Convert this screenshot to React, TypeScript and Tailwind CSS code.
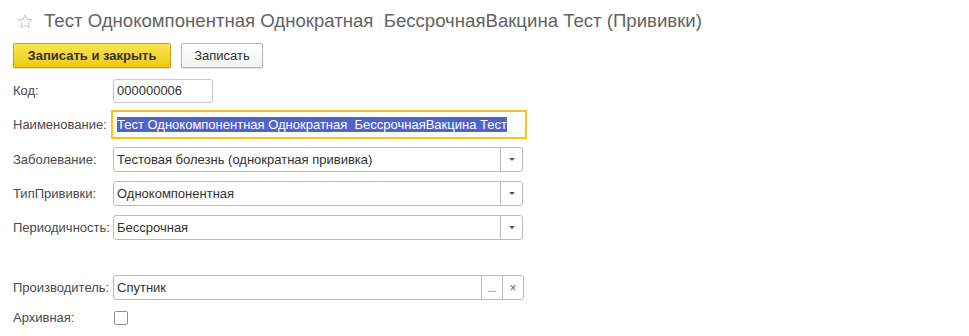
import React from 'react';

const labelCls = 'w-[100px] shrink-0 text-[13px] text-[#4a4a4a]';
const fieldCls = 'h-[25px] flex items-stretch border border-[#bcbcbc] rounded-[3px] bg-white';

const DropButton: React.FC = () => (
  <div className="w-[22px] border-l border-[#bcbcbc] flex items-center justify-center">
    <svg width="6" height="3" viewBox="0 0 6 3">
      <path d="M0 0 H6 L3 3 Z" fill="#555" />
    </svg>
  </div>
);

const SelectField: React.FC<{ value: string }> = ({ value }) => (
  <div className={`${fieldCls} w-[410px]`}>
    <div className="flex-1 flex items-center pl-[3px] text-[13px] text-[#333]">{value}</div>
    <DropButton />
  </div>
);

const App: React.FC = () => {
  return (
    <div className="w-[969px] h-[336px] bg-white px-[13px] overflow-hidden" style={{ fontFamily: '"Liberation Sans", Arial, sans-serif' }}>
      {/* title */}
      <div className="mt-[7px] h-[28px] flex items-center">
        <svg width="16" height="15" viewBox="0 0 16 15" className="ml-[4px] mr-[11px]">
          <path
            d="M8 0.8 L9.9 5.3 L14.8 5.7 L11.1 8.9 L12.2 13.7 L8 11.2 L3.8 13.7 L4.9 8.9 L1.2 5.7 L6.1 5.3 Z"
            fill="none"
            stroke="#c4c4c4"
            strokeWidth="1"
            strokeLinejoin="round"
          />
        </svg>
        <span className="text-[18.6px] text-[#636363] whitespace-pre">Тест Однокомпонентная Однократная  БессрочнаяВакцина Тест (Прививки)</span>
      </div>

      {/* buttons */}
      <div className="mt-[8px] flex gap-[10px]">
        <button className="h-[25px] w-[158px] rounded-[2px] border border-[#c9a400] bg-gradient-to-b from-[#fbe54f] to-[#f0c900] text-[13px] font-bold text-[#333] shadow-[0_1px_1px_rgba(0,0,0,0.15)]">
          Записать и закрыть
        </button>
        <button className="h-[25px] w-[82px] rounded-[2px] border border-[#b5b5b5] bg-gradient-to-b from-white to-[#f2f2f2] text-[13px] text-[#333] shadow-[0_1px_1px_rgba(0,0,0,0.12)]">
          Записать
        </button>
      </div>

      {/* Код */}
      <div className="mt-[11px] flex items-center">
        <div className={labelCls}>Код:</div>
        <div className="h-[24px] w-[100px] border border-[#c8c8c8] rounded-[3px] flex items-center pl-[3px] text-[13px] text-[#333]">
          000000006
        </div>
      </div>

      {/* Наименование */}
      <div className="mt-[7px] flex items-center">
        <div className="w-[98px] shrink-0 text-[13px] text-[#4a4a4a]">Наименование:</div>
        <div className="h-[29px] w-[416px] border-2 border-[#f5c518] flex items-center pl-[4px]">
          <span className="bg-[#5063c8] text-white text-[13px] leading-[15px] whitespace-pre">
            Тест Однокомпонентная Однократная  БессрочнаяВакцина Тест
          </span>
        </div>
      </div>

      {/* Заболевание */}
      <div className="mt-[8px] flex items-center">
        <div className={labelCls}>Заболевание:</div>
        <SelectField value="Тестовая болезнь (однократная прививка)" />
      </div>

      <div className="mt-[9px] flex items-center">
        <div className={labelCls}>ТипПрививки:</div>
        <SelectField value="Однокомпонентная" />
      </div>

      <div className="mt-[9px] flex items-center">
        <div className={labelCls}>Периодичность:</div>
        <SelectField value="Бессрочная" />
      </div>

      {/* Производитель */}
      <div className="mt-[35px] flex items-center">
        <div className={labelCls}>Производитель:</div>
        <div className={`${fieldCls} w-[411px]`}>
          <div className="flex-1 flex items-center pl-[3px] text-[13px] text-[#333]">Спутник</div>
          <div className="w-[21px] border-l border-[#bcbcbc] flex items-end justify-center pb-[5px] text-[11px] leading-none text-[#555]">...</div>
          <div className="w-[21px] border-l border-[#bcbcbc] flex items-center justify-center text-[12px] leading-none text-[#666]">×</div>
        </div>
      </div>

      {/* Архивная */}
      <div className="mt-[8px] flex items-center">
        <div className={labelCls}>Архивная:</div>
        <div className="ml-[1px] w-[14px] h-[14px] border border-[#8f8f8f] rounded-[2px] bg-white" />
      </div>
    </div>
  );
};

export default App;
